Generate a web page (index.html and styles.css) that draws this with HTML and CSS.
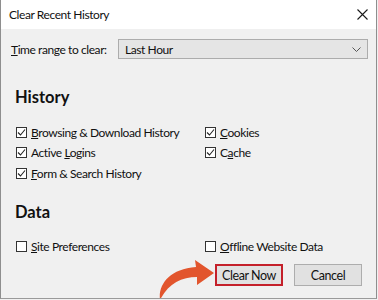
FILE: index.html
```html
<!DOCTYPE html>
<html>
<head>
<meta charset="utf-8">
<link rel="stylesheet" href="styles.css">
</head>
<body>
<div class="window">
  <div class="titlebar">
    <span class="title">Clear Recent History</span>
    <svg class="close" width="11" height="11" viewBox="0 0 11 11"><path d="M0.5 0.5L10.5 10.5M10.5 0.5L0.5 10.5" stroke="#1a1a1a" stroke-width="1.1" fill="none"/></svg>
  </div>
  <div class="content">
    <div class="range-row">
      <span class="range-label"><u>T</u>ime range to clear:</span>
      <div class="select">
        <span>Last Hour</span>
        <svg width="9" height="5" viewBox="0 0 9 5"><path d="M0.5 0.5L4.5 4.5L8.5 0.5" stroke="#555" stroke-width="1" fill="none"/></svg>
      </div>
    </div>
    <h2 class="section history">History</h2>
    <div class="grid">
      <div class="item"><span class="box checked"><svg width="9" height="9" viewBox="0 0 9 9"><path d="M1 4.5L3.5 7L8 1.5" stroke="#222" stroke-width="1.1" fill="none"/></svg></span><span><u>B</u>rowsing &amp; Download History</span></div>
      <div class="item"><span class="box checked"><svg width="9" height="9" viewBox="0 0 9 9"><path d="M1 4.5L3.5 7L8 1.5" stroke="#222" stroke-width="1.1" fill="none"/></svg></span><span><u>C</u>ookies</span></div>
      <div class="item"><span class="box checked"><svg width="9" height="9" viewBox="0 0 9 9"><path d="M1 4.5L3.5 7L8 1.5" stroke="#222" stroke-width="1.1" fill="none"/></svg></span><span>Active <u>L</u>ogins</span></div>
      <div class="item"><span class="box checked"><svg width="9" height="9" viewBox="0 0 9 9"><path d="M1 4.5L3.5 7L8 1.5" stroke="#222" stroke-width="1.1" fill="none"/></svg></span><span>C<u>a</u>che</span></div>
      <div class="item"><span class="box checked"><svg width="9" height="9" viewBox="0 0 9 9"><path d="M1 4.5L3.5 7L8 1.5" stroke="#222" stroke-width="1.1" fill="none"/></svg></span><span><u>F</u>orm &amp; Search History</span></div>
    </div>
    <h2 class="section data">Data</h2>
    <div class="grid">
      <div class="item"><span class="box"></span><span><u>S</u>ite Preferences</span></div>
      <div class="item"><span class="box"></span><span><u>O</u>ffline Website Data</span></div>
    </div>
    <div class="buttons">
      <div class="btn primary">Clear Now</div>
      <div class="btn">Cancel</div>
    </div>
  </div>
  <svg class="arrow" width="70" height="45" viewBox="0 0 70 45">
    <path d="M7 44 C5 29 16 13 43 11 L42 4 L61 17 L44 29 L44 21 C28 21 15 28 7 44 Z" fill="#e2552d"/>
  </svg>
</div>
</body>
</html>
```
FILE: styles.css
```css
html, body {
  margin: 0;
  padding: 0;
  background: #f0f0f0;
}
body {
  font-family: Lato, "Noto Sans", sans-serif;
  font-size: 12px;
  letter-spacing: -0.42px;
  color: #111;
}
.window {
  position: relative;
  width: 377px;
  height: 299px;
  box-sizing: border-box;
  border-left: 1px solid #8e8e8e;
  border-right: 1px solid #8e8e8e;
  border-bottom: 1px solid #9a9a9a;
  background: #f0f0f0;
  overflow: hidden;
}
.titlebar {
  height: 29px;
  background: #ffffff;
  display: flex;
  align-items: center;
  justify-content: space-between;
  padding: 0 8px 0 8px;
}
.content {
  padding: 10px 8px 0 10px;
}
.range-row {
  display: flex;
  align-items: center;
  height: 20px;
}
.range-label {
  width: 107px;
  white-space: nowrap;
}
.select {
  flex: 1;
  height: 20px;
  box-sizing: border-box;
  border: 1px solid #acacac;
  background: #e5e5e5;
  display: flex;
  align-items: center;
  justify-content: space-between;
  padding: 0 6px 0 6px;
}
.section {
  margin: 0;
  font-size: 16.5px;
  font-weight: 700;
  letter-spacing: 0;
  line-height: 20px;
  padding-left: 4px;
}
.history {
  margin-top: 28px;
}
.data {
  margin-top: 18px;
}
.grid {
  display: grid;
  grid-template-columns: 189px 1fr;
  grid-auto-rows: 20.5px;
  padding-left: 5px;
}
.history + .grid {
  margin-top: 15px;
}
.data + .grid {
  margin-top: 15px;
}
.item {
  display: flex;
  align-items: center;
  gap: 4px;
  white-space: nowrap;
}
.box {
  width: 11px;
  height: 11px;
  box-sizing: border-box;
  border: 1px solid #333;
  background: #fff;
  display: flex;
  align-items: center;
  justify-content: center;
  flex: none;
}
.buttons {
  display: flex;
  justify-content: flex-end;
  gap: 11px;
  margin-top: 7px;
  padding-right: 6px;
}
.btn {
  width: 68px;
  height: 22px;
  box-sizing: border-box;
  border: 1px solid #adadad;
  background: #e1e1e1;
  display: flex;
  align-items: center;
  justify-content: center;
  font-size: 12.5px;
}
.btn.primary {
  border: 2px solid #c4202a;
}
.arrow {
  position: absolute;
  left: 152px;
  top: 256px;
}
```
